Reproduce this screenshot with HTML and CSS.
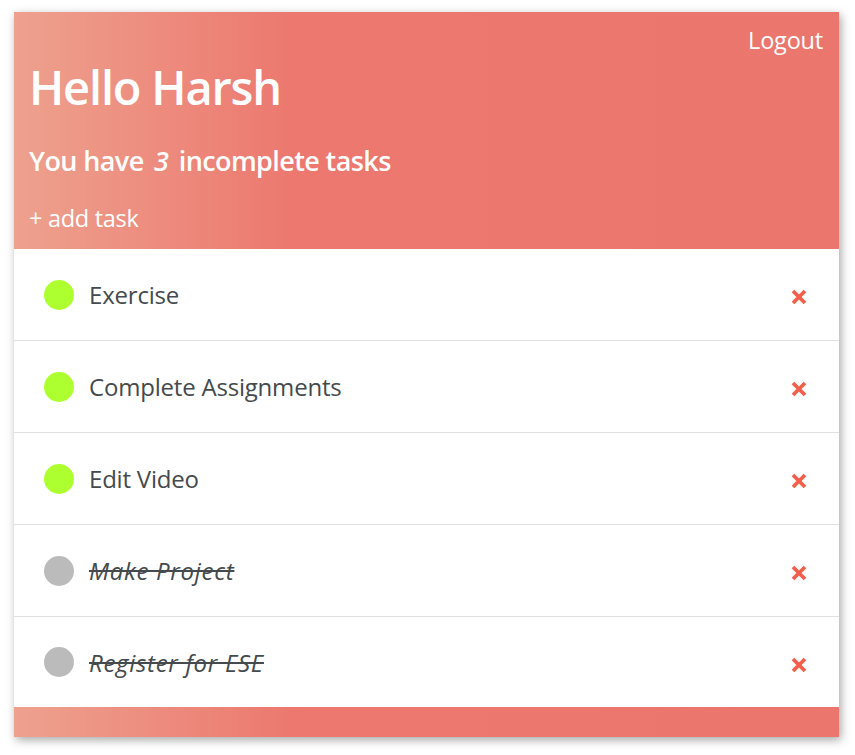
FILE: index.html
```html
<!DOCTYPE html>
<html>
<head>
<meta charset="utf-8">
<link rel="stylesheet" href="styles.css">
</head>
<body>
<div class="card">
  <header class="head">
    <div class="top"><span class="logout">Logout</span></div>
    <h1 class="hello">Hello Harsh</h1>
    <h2 class="count">You have <em>3</em> incomplete tasks</h2>
    <div class="add">+ add task</div>
  </header>
  <ul class="tasks">
    <li class="task"><span class="dot"></span><span class="name">Exercise</span><svg class="del" viewBox="0 0 16 16"><path d="M2 2L14 14M14 2L2 14"/></svg></li>
    <li class="task"><span class="dot"></span><span class="name">Complete Assignments</span><svg class="del" viewBox="0 0 16 16"><path d="M2 2L14 14M14 2L2 14"/></svg></li>
    <li class="task"><span class="dot"></span><span class="name">Edit Video</span><svg class="del" viewBox="0 0 16 16"><path d="M2 2L14 14M14 2L2 14"/></svg></li>
    <li class="task done"><span class="dot"></span><span class="name">Make Project</span><svg class="del" viewBox="0 0 16 16"><path d="M2 2L14 14M14 2L2 14"/></svg></li>
    <li class="task done"><span class="dot"></span><span class="name">Register for ESE</span><svg class="del" viewBox="0 0 16 16"><path d="M2 2L14 14M14 2L2 14"/></svg></li>
  </ul>
  <footer class="foot"></footer>
</div>
</body>
</html>
```
FILE: styles.css
```css
html, body {
  margin: 0;
  background: #fff;
}
body {
  padding: 12px 16px 18px 14px;
  font-family: "Open Sans", "Noto Sans", sans-serif;
}
.card {
  background: #fff;
  box-shadow: 2px 3px 9px rgba(0,0,0,0.35);
}
.head, .foot {
  background: linear-gradient(to right, #eea18e 0%, #ec786f 34%, #eb766e 100%);
  color: #fff;
}
.head {
  padding: 14px 16px 16px 15px;
  height: 207px;
}
.top {
  display: flex;
  justify-content: flex-end;
}
.logout {
  font-size: 23.5px;
  line-height: 28px;
  letter-spacing: -0.2px;
}
.hello {
  margin: 5px 0 0 0;
  font-size: 47px;
  font-weight: 600;
  line-height: 56px;
  letter-spacing: -1.2px;
}
.count {
  margin: 29px 0 0 0;
  font-size: 27px;
  font-weight: 600;
  line-height: 34px;
  letter-spacing: -0.6px;
}
.count em {
  margin: 0 4px;
}
.add {
  margin-top: 25px;
  font-size: 23.5px;
  line-height: 30px;
  letter-spacing: -0.3px;
}
.tasks {
  list-style: none;
  margin: 0;
  padding: 0;
}
.task {
  display: flex;
  align-items: center;
  height: 91px;
  padding: 0 32px 0 30px;
  border-bottom: 1px solid #e0e0e0;
  color: #444a4e;
  font-size: 24px;
}
.task:last-child {
  border-bottom: none;
  height: 90px;
}
.dot {
  width: 30px;
  height: 30px;
  border-radius: 50%;
  background: #adff2f;
  flex: none;
}
.done .dot {
  background: #bbbbbb;
}
.name {
  margin-left: 15px;
  flex: 1;
  letter-spacing: -0.2px;
}
.done .name {
  font-style: italic;
  text-decoration: line-through;
  letter-spacing: 0.7px;
}
.del {
  width: 16px;
  height: 16px;
  margin-top: 5px;
  stroke: #f2604c;
  stroke-width: 3.8;
  fill: none;
}
.foot {
  height: 30px;
}
```
